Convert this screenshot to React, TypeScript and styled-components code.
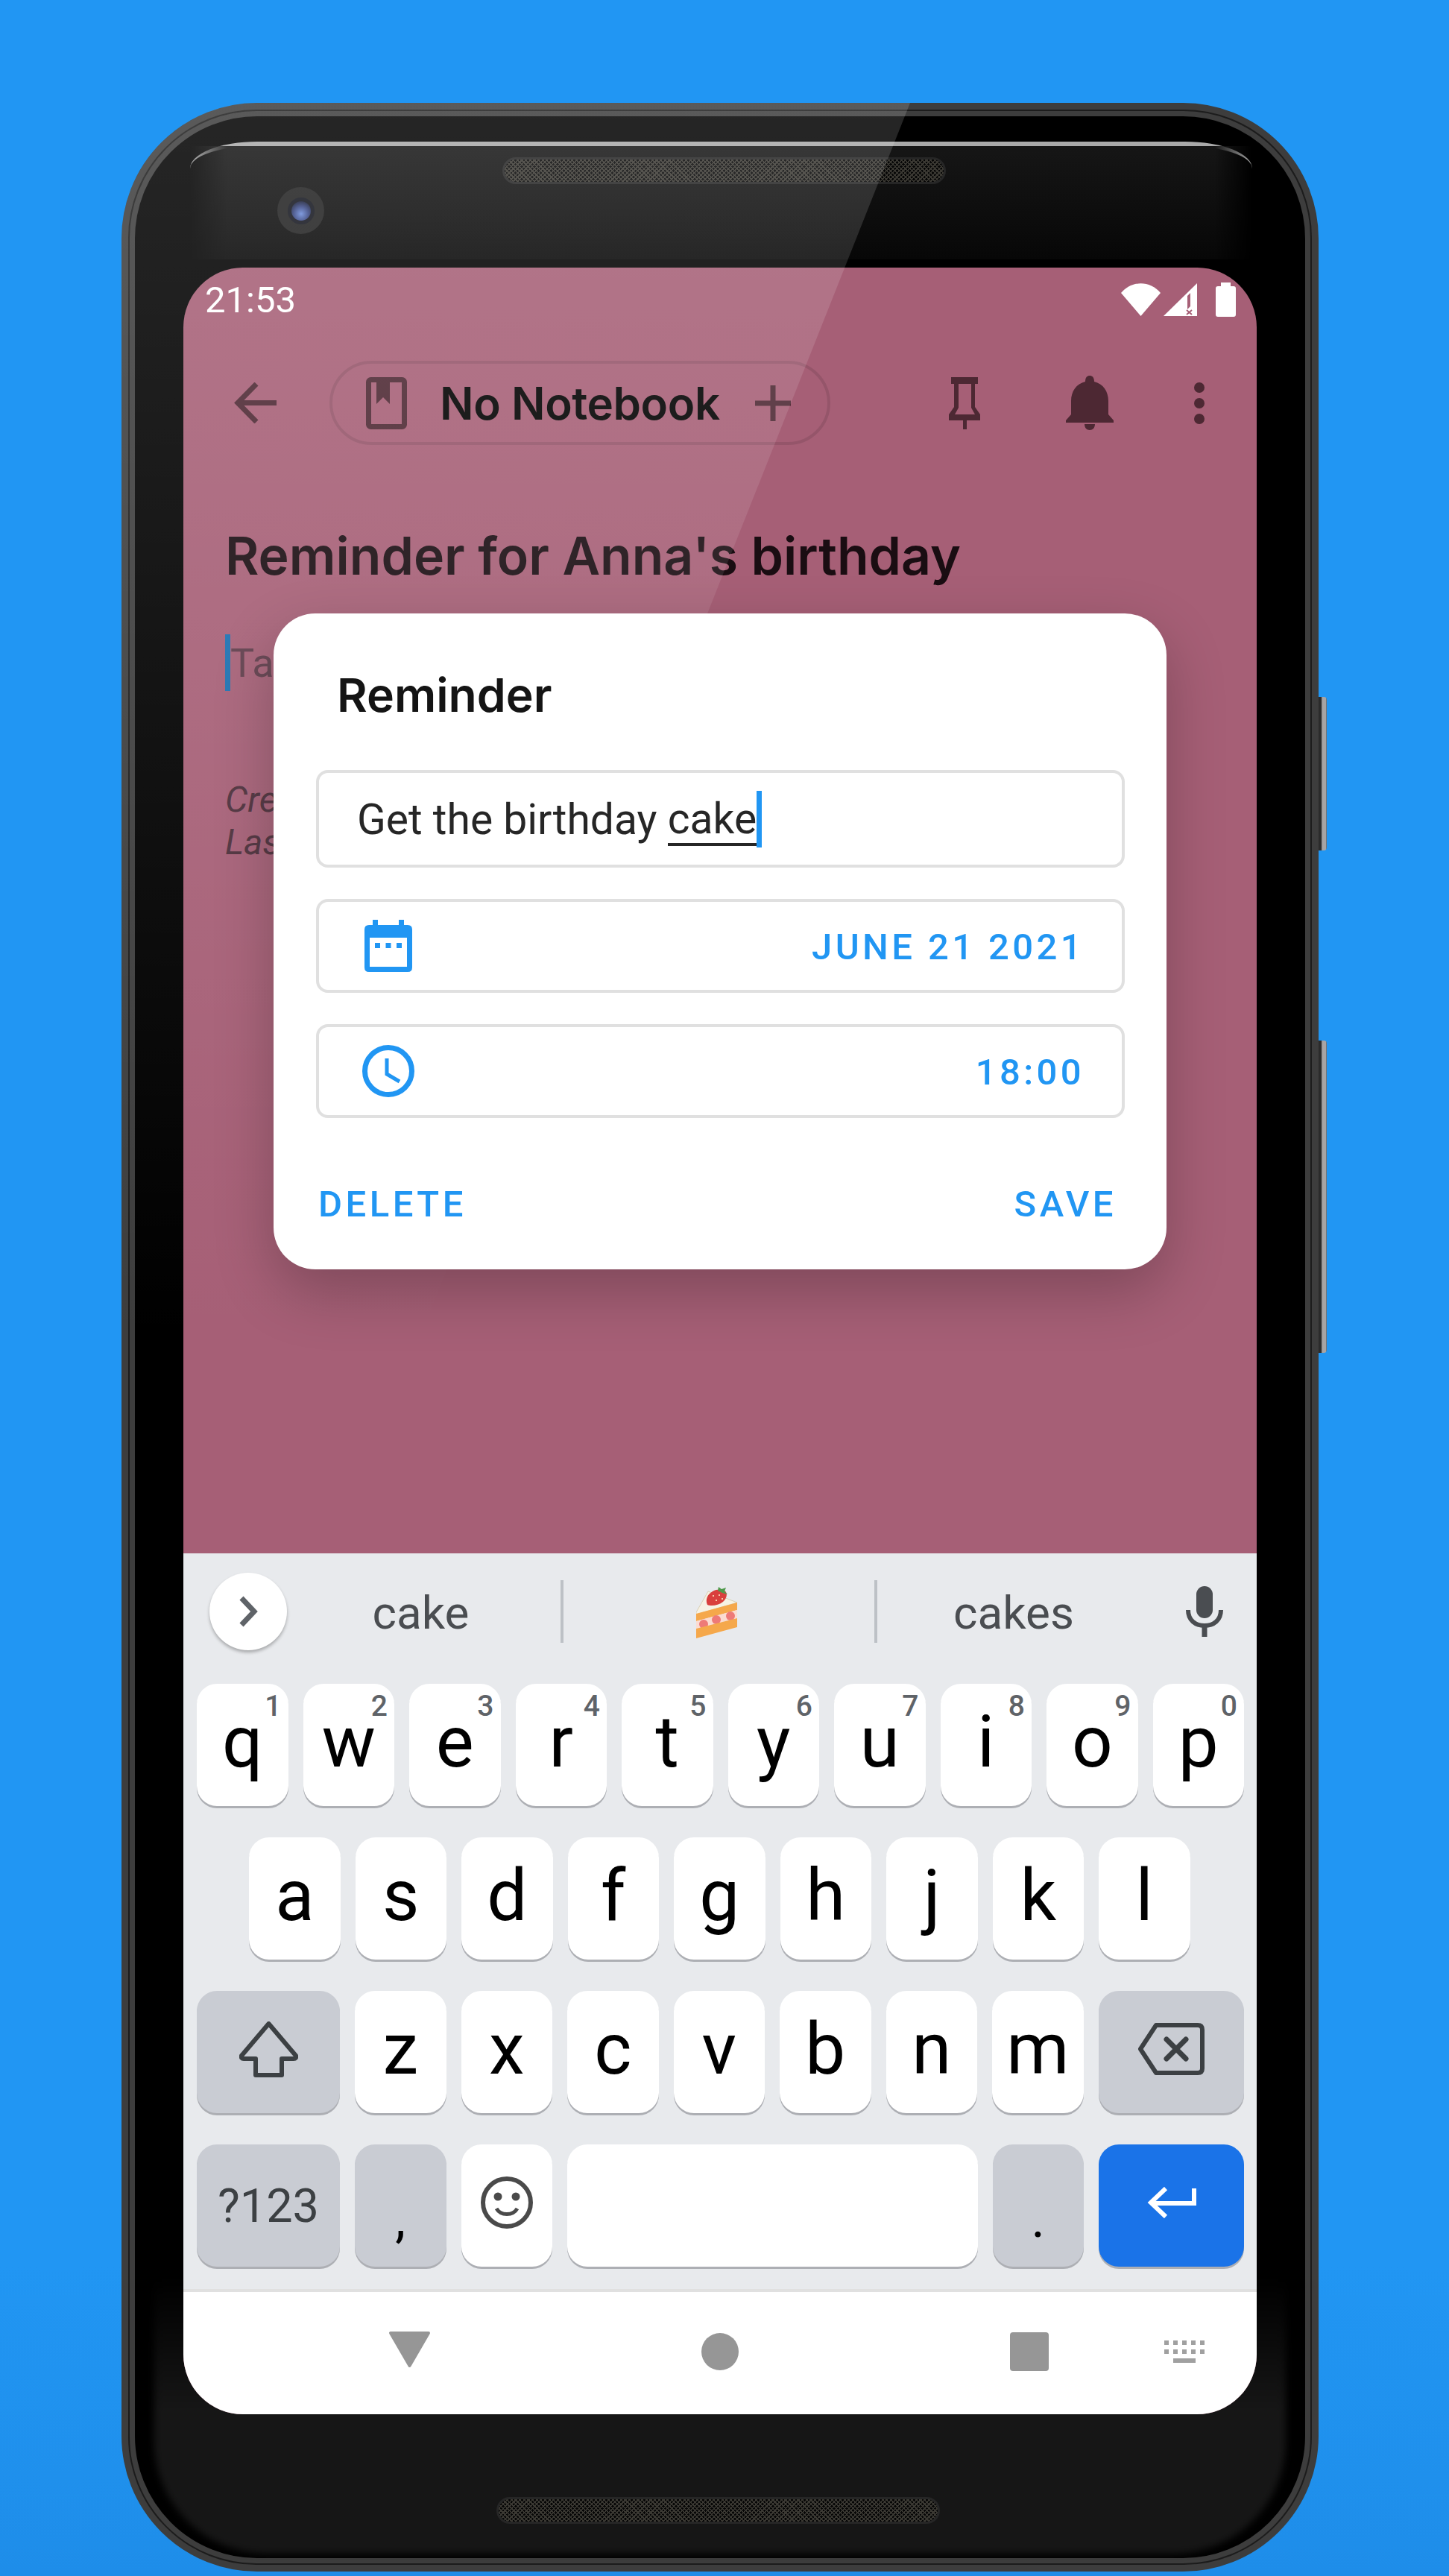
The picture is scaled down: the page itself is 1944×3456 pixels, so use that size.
import React from 'react'
import styled, { createGlobalStyle } from 'styled-components'

const GlobalStyle = createGlobalStyle`
  html, body {
    margin: 0;
    padding: 0;
  }
  body {
    width: 1944px;
    height: 3456px;
    overflow: hidden;
    font-family: Roboto, "Liberation Sans", sans-serif;
  }
  * {
    box-sizing: border-box;
  }
`

const Page = styled.div`
  width: 1944px;
  height: 3456px;
  padding: 138px 0 0 163px;
  background: linear-gradient(180deg, #2196f3 88%, #1e8de9 100%);
`

const Phone = styled.div`
  position: relative;
  width: 1606px;
  height: 3312px;
  border: 18px solid #3d3d3d;
  border-radius: 182px;
  background: #000;

  &::before {
    content: '';
    position: absolute;
    inset: -9px;
    border: 2px solid #1c1c1c;
    border-radius: 172px;
  }
`

const SideButton = styled.div<{ $top: number; $height: number }>`
  position: absolute;
  right: -29px;
  top: ${(p) => p.$top}px;
  width: 11px;
  height: ${(p) => p.$height}px;
  border-radius: 0 4px 4px 0;
  background: linear-gradient(90deg, #2b2b2b 0 30%, #a8a4a4 45% 90%, #4c4c4c 100%);
`

const Glare = styled.div`
  position: absolute;
  z-index: 1;
  inset: -18px;
  border-radius: 182px;
  background: linear-gradient(180deg, rgba(255, 255, 255, 0.15) 0, rgba(255, 255, 255, 0) 1660px);
  clip-path: polygon(0 0, 1058px 0, 0 2665px);
  pointer-events: none;
`

const TopBezel = styled.div`
  position: relative;
  isolation: isolate;
  display: flex;
  align-items: flex-start;
  height: 158px;
  margin: 34px 71px 0 74px;
  padding-left: 117px;
  border-top: 6px solid #a9a9a9;
  border-radius: 90px 90px 0 0 / 36px 36px 0 0;

  &::before {
    content: '';
    position: absolute;
    z-index: -1;
    inset: 0;
    background: linear-gradient(180deg, #161616, #070707);
    mask-image: linear-gradient(90deg, transparent, #000 50px, #000 calc(100% - 50px), transparent);
  }
`

const BottomShade = styled.div`
  position: absolute;
  left: 26px;
  right: 26px;
  top: 2900px;
  bottom: 6px;
  border-radius: 0 0 150px 150px;
  background: linear-gradient(180deg, transparent 0, #161616 180px, #161616 430px, #232323 468px, #0a0a0a 494px);
  filter: blur(5px);
`

const Camera = styled.div`
  display: flex;
  align-items: center;
  justify-content: center;
  width: 63px;
  height: 63px;
  margin-top: 55px;
  border-radius: 50%;
  background: #222;
`

const Lens = styled.div`
  width: 36px;
  height: 36px;
  border-radius: 50%;
  border: 5px solid #14161f;
  background: radial-gradient(circle at 50% 65%, #6c8bd8 0, #3b4a86 45%, #101425 90%);
`

const Speaker = styled.div<{ $marginLeft: number; $marginTop: number }>`
  position: relative;
  width: 595px;
  height: 36px;
  margin-left: ${(p) => p.$marginLeft}px;
  margin-top: ${(p) => p.$marginTop}px;
  border: 3px solid #262626;
  border-radius: 18px;
  background:
    repeating-linear-gradient(45deg, #3a3832 0 1.5px, transparent 1.5px 4px),
    repeating-linear-gradient(-45deg, #3a3832 0 1.5px, #060606 1.5px 4px);
`

const Screen = styled.div`
  position: relative;
  display: flex;
  flex-direction: column;
  width: 1440px;
  height: 2880px;
  margin: 11px 0 0 65px;
  border-radius: 80px;
  overflow: hidden;
  background: #a65f76;
`

const BottomBezel = styled.div`
  display: flex;
  justify-content: center;
  padding-top: 111px;
`

const StatusBar = styled.div`
  display: flex;
  align-items: center;
  justify-content: space-between;
  height: 86px;
  padding: 0 28px 0 29px;
`

const Clock = styled.span`
  font-size: 49px;
  color: #fff;
`

const StatusIcons = styled.div`
  display: flex;
  align-items: center;
`

const Toolbar = styled.div`
  display: flex;
  align-items: center;
  padding: 39px 0 0 68px;
`

const ToolIcon = styled.svg<{ $gap: number }>`
  flex: none;
  margin-left: ${(p) => p.$gap}px;
`

const Chip = styled.div`
  display: flex;
  align-items: center;
  width: 672px;
  height: 113px;
  margin-left: 71px;
  padding-left: 45px;
  border: 4px solid rgba(0, 0, 0, 0.1);
  border-radius: 57px;
`

const ChipLabel = styled.span`
  flex: 1;
  margin-left: 44px;
  font-family: Inter, sans-serif;
  font-size: 60px;
  font-weight: 600;
  letter-spacing: -0.4px;
  color: #000;
  white-space: nowrap;
`

const NoteArea = styled.div`
  flex: 1;
  padding-left: 56px;
`

const NoteTitle = styled.div`
  margin-top: 109px;
  font-family: Inter, sans-serif;
  font-size: 69.7px;
  font-weight: 600;
  line-height: 80px;
  color: #1a0d12;
  white-space: nowrap;
`

const TagLine = styled.div`
  display: flex;
  align-items: center;
  height: 76px;
  margin-top: 65px;
  font-size: 54px;
  color: #5f3c4a;
`

const NoteCaret = styled.span`
  width: 7px;
  height: 76px;
  background: #1a6fb0;
`

const Meta = styled.div`
  margin-top: 117px;
  font-size: 48px;
  font-style: italic;
  line-height: 57px;
  color: #4d2f3b;
`

const Dialog = styled.div`
  position: absolute;
  z-index: 2;
  left: 121px;
  top: 464px;
  width: 1198px;
  height: 880px;
  padding: 0 56px 0 57px;
  border-radius: 56px;
  background: #fff;
  box-shadow: 0 30px 80px rgba(0, 0, 0, 0.24);
`

const DialogTitle = styled.div`
  padding: 69px 0 0 28px;
  margin-bottom: 61px;
  font-family: Inter, sans-serif;
  font-size: 62.5px;
  font-weight: 600;
  line-height: 80px;
  color: #141414;
`

const Field = styled.div<{ $height: number }>`
  display: flex;
  align-items: center;
  justify-content: space-between;
  height: ${(p) => p.$height}px;
  margin-bottom: 42px;
  padding: 0 50px 0 61px;
  border: 4px solid #e0e0e0;
  border-radius: 16px;
`

const InputText = styled.div`
  display: flex;
  align-items: center;
  margin: 2px 0 0 -10px;
  font-size: 57px;
  color: #262626;
  white-space: pre;
`

const Composing = styled.span`
  border-bottom: 4px solid #262626;
  line-height: 64px;
  margin-top: 3px;
`

const InputCaret = styled.span`
  flex: none;
  width: 7px;
  height: 76px;
  margin-top: -2px;
  background: #2196f3;
`

const FieldValue = styled.span`
  padding-top: 3px;
  font-size: 49px;
  font-weight: 500;
  letter-spacing: 4.4px;
  color: #2196f3;
`

const Actions = styled.div`
  display: flex;
  justify-content: space-between;
  margin-top: 87px;
  padding: 0 11px 0 3px;
`

const ActionLabel = styled.span`
  font-size: 49px;
  font-weight: 500;
  letter-spacing: 4.5px;
  color: #2196f3;
`

const Keyboard = styled.div`
  display: flex;
  flex-direction: column;
  gap: 42px;
  height: 991px;
  padding: 0 17px 30px 18px;
  border-bottom: 4px solid #e0e0e0;
  background: #e8eaed;
`

const Suggestions = styled.div`
  display: flex;
  align-items: center;
  height: 155px;
  margin-bottom: -22px;
  padding-left: 17px;
`

const ExpandButton = styled.div`
  display: flex;
  flex: none;
  align-items: center;
  justify-content: center;
  width: 104px;
  height: 104px;
  border-radius: 50%;
  background: #fff;
  box-shadow: 0 3px 4px rgba(0, 0, 0, 0.28);
`

const Suggestion = styled.div<{ $width: number; $shift?: number }>`
  display: flex;
  align-items: center;
  justify-content: center;
  width: ${(p) => p.$width}px;
  padding-right: ${(p) => p.$shift || 0}px;
  padding-top: 3px;
  font-size: 62px;
  color: #4a4d51;
`

const SuggestionDivider = styled.div`
  flex: none;
  width: 4px;
  height: 84px;
  background: #bdc1c6;
`

const KeyRow = styled.div<{ $inset?: number }>`
  display: flex;
  gap: 20px;
  height: 164px;
  padding-left: ${(p) => p.$inset || 0}px;
`

const Key = styled.div<{ $width?: number; $tone?: 'light' | 'grey' | 'blue' }>`
  position: relative;
  display: flex;
  flex: none;
  align-items: center;
  justify-content: center;
  width: ${(p) => p.$width || 122.5}px;
  height: 164px;
  padding-bottom: 8px;
  border-radius: 27px;
  font-size: 96px;
  color: #000;
  background: ${(p) => (p.$tone === 'grey' ? '#c9ccd3' : p.$tone === 'blue' ? '#1a73e8' : '#fff')};
  box-shadow: 0 3px 0 #adafb4;
`

const Hint = styled.span`
  position: absolute;
  top: 7px;
  right: 9px;
  font-size: 39px;
  font-weight: 500;
  line-height: 46px;
  color: #5f6368;
`

const ModeLabel = styled.span`
  margin-top: 9px;
  font-size: 63px;
  color: #3c4043;
`

const Punctuation = styled.span`
  margin-top: 44px;
  font-size: 70px;
  line-height: 120px;
`

const NavBar = styled.div`
  display: flex;
  flex: none;
  align-items: center;
  height: 164px;
  padding: 0 0 4px 275px;
  background: #fff;
`

const NavShape = styled.div<{ $gap: number }>`
  flex: none;
  width: 52px;
  height: 52px;
  margin-left: ${(p) => p.$gap}px;
  background: #969696;
`

const NavCircle = styled(NavShape)`
  width: 50px;
  height: 50px;
  border-radius: 50%;
`

const NavSquare = styled(NavShape)`
  border-radius: 4px;
`

const letters = [
  ['q', '1'], ['w', '2'], ['e', '3'], ['r', '4'], ['t', '5'],
  ['y', '6'], ['u', '7'], ['i', '8'], ['o', '9'], ['p', '0'],
]
const homeRow = ['a', 's', 'd', 'f', 'g', 'h', 'j', 'k', 'l']
const bottomRow = ['z', 'x', 'c', 'v', 'b', 'n', 'm']

const iconColor = '#4d2833'
const blue = '#2196f3'

const WifiIcon = () => (
  <svg width="53" height="44" viewBox="0 0 53 44" style={{ marginRight: 4 }}>
    <path d="M0 13C14-4 39-4 53 13L26.5 44Z" fill="#fff" />
  </svg>
)

const CellIcon = () => (
  <svg width="45" height="44" viewBox="0 0 45 44" style={{ marginRight: 25 }}>
    <path d="M0 44L45 0V44Z" fill="#fff" />
    <path d="M32 17L36 13V31L32 35Z" fill="#a65f76" />
    <path d="M31 36L38 42M38 36L31 42" stroke="#a65f76" strokeWidth="2" />
  </svg>
)

const BatteryIcon = () => (
  <svg width="27" height="46" viewBox="0 0 27 46">
    <path d="M7 0H20V5H24Q27 5 27 8V43Q27 46 24 46H3Q0 46 0 43V8Q0 5 3 5H7Z" fill="#fff" />
  </svg>
)

const CakeIcon = () => (
  <svg width="55" height="69" viewBox="0 0 55 69" role="img" aria-label="shortcake">
    <path d="M0 34L16 6L55 21L0 37Z" fill="#f6f2e4" stroke="#d9cfb4" strokeWidth="1" />
    <path d="M0 36L55 21V31L0 46Z" fill="#f5a84b" />
    <path d="M0 46L55 31V42L0 56Z" fill="#fbdcd2" />
    <circle cx="10" cy="50" r="6" fill="#ee7a78" />
    <circle cx="27" cy="44" r="6" fill="#ee7a78" />
    <circle cx="46" cy="39" r="6" fill="#ee7a78" />
    <path d="M0 56L55 42V54L0 69Z" fill="#f5a84b" />
    <path d="M38 5C43 8 41 16 36 20C30 25 20 26 15 24C12 17 15 10 22 6C28 3 33 3 38 5Z" fill="#d93f3d" />
    <path d="M29 5L30 0L34 3L40 1L38 6L42 10L35 8Z" fill="#4f9a4b" />
    <path d="M22 11h2v2h-2zM30 10h2v2h-2zM26 17h2v2h-2zM34 15h2v2h-2z" fill="#f6c9a8" />
  </svg>
)

const App = () => {
  return (
    <Page>
      <GlobalStyle />
      <Phone>
        <SideButton $top={779} $height={206} />
        <SideButton $top={1240} $height={419} />
        <BottomShade />
        <TopBezel>
          <Camera>
            <Lens />
          </Camera>
          <Speaker $marginLeft={239} $marginTop={15} />
        </TopBezel>
        <Screen>
          <StatusBar>
            <Clock>21:53</Clock>
            <StatusIcons>
              <WifiIcon />
              <CellIcon />
              <BatteryIcon />
            </StatusIcons>
          </StatusBar>
          <Toolbar>
            <ToolIcon $gap={0} width="57" height="55" viewBox="0 0 57 55">
              <path d="M30 2L5 27.5L30 53M5 27.5H57" fill="none" stroke={iconColor} strokeWidth="7" />
            </ToolIcon>
            <Chip>
              <svg width="55" height="70" viewBox="0 0 55 70">
                <rect x="3.5" y="3.5" width="48" height="63" rx="3" fill="none" stroke={iconColor} strokeWidth="7" />
                <path d="M14 3H32V36L23 27L14 36Z" fill={iconColor} />
              </svg>
              <ChipLabel>No Notebook</ChipLabel>
              <svg width="48" height="48" viewBox="0 0 48 48" style={{ marginRight: 49 }}>
                <path d="M24 0V48M0 24H48" stroke={iconColor} strokeWidth="7" />
              </svg>
            </Chip>
            <ToolIcon $gap={159} width="42" height="70" viewBox="0 0 42 70">
              <path
                fillRule="evenodd"
                d="M3 0H39V9H35V40L42 50V58H24V70H19V58H0V50L7 40V9H3ZM13 9V41L8 50H35L30 41V9Z"
                fill={iconColor}
              />
            </ToolIcon>
            <ToolIcon $gap={115} width="64" height="73" viewBox="0 0 64 73">
              <path
                d="M32 0C36 0 38 3 38 8C50 11 57 21 57 34V52L64 60V63H0V60L7 52V34C7 21 14 11 26 8C26 3 28 0 32 0ZM25 65H39C39 70 36 73 32 73C28 73 25 70 25 65Z"
                fill={iconColor}
              />
            </ToolIcon>
            <ToolIcon $gap={108} width="14" height="56" viewBox="0 0 14 56">
              <circle cx="7" cy="7" r="7" fill={iconColor} />
              <circle cx="7" cy="28" r="7" fill={iconColor} />
              <circle cx="7" cy="49" r="7" fill={iconColor} />
            </ToolIcon>
          </Toolbar>
          <NoteArea>
            <NoteTitle>Reminder for Anna's birthday</NoteTitle>
            <TagLine>
              <NoteCaret />
              Ta
            </TagLine>
            <Meta>
              Cre
              <br />
              Las
            </Meta>
          </NoteArea>
          <Dialog>
            <DialogTitle>Reminder</DialogTitle>
            <Field $height={131}>
              <InputText>
                Get the birthday <Composing>cake</Composing>
                <InputCaret />
              </InputText>
            </Field>
            <Field $height={126}>
              <svg width="64" height="70" viewBox="0 0 64 70">
                <path
                  fillRule="evenodd"
                  d="M11 0H18V7H46V0H53V7H58Q64 7 64 13V64Q64 70 58 70H6Q0 70 0 64V13Q0 7 6 7H11ZM7 24V63H57V24Z"
                  fill={blue}
                />
                <path d="M14 31H21V38H14ZM28.500 31H35.500V38H28.500ZM43 31H50V38H43Z" fill={blue} />
              </svg>
              <FieldValue>JUNE 21 2021</FieldValue>
            </Field>
            <Field $height={126}>
              <svg width="70" height="70" viewBox="0 0 70 70" style={{ marginLeft: -3 }}>
                <circle cx="35" cy="35" r="31.500" fill="none" stroke={blue} strokeWidth="7" />
                <path d="M33 18V39L50 49" fill="none" stroke={blue} strokeWidth="5" />
              </svg>
              <FieldValue>18:00</FieldValue>
            </Field>
            <Actions>
              <ActionLabel>DELETE</ActionLabel>
              <ActionLabel>SAVE</ActionLabel>
            </Actions>
          </Dialog>
          <Keyboard>
            <Suggestions>
              <ExpandButton>
                <svg width="26" height="42" viewBox="0 0 26 42">
                  <path d="M4 3L21 21L4 39" fill="none" stroke="#5f6368" strokeWidth="7" />
                </svg>
              </ExpandButton>
              <Suggestion $width={367} $shift={8}>cake</Suggestion>
              <SuggestionDivider />
              <Suggestion $width={417} $shift={6}>
                <CakeIcon />
              </Suggestion>
              <SuggestionDivider />
              <Suggestion $width={366}>cakes</Suggestion>
              <svg width="50" height="68" viewBox="0 0 50 68" style={{ marginLeft: 48 }}>
                <rect x="14" y="0" width="22" height="43" rx="11" fill="#4a4d51" />
                <path d="M3 32C3 46 13 53 25 53C37 53 47 46 47 32" fill="none" stroke="#4a4d51" strokeWidth="6" />
                <path d="M25 50V68" stroke="#4a4d51" strokeWidth="7" />
              </svg>
            </Suggestions>
            <KeyRow>
              {letters.map(([letter, digit]) => (
                <Key key={letter}>
                  {letter}
                  <Hint>{digit}</Hint>
                </Key>
              ))}
            </KeyRow>
            <KeyRow $inset={70}>
              {homeRow.map((letter) => (
                <Key key={letter}>{letter}</Key>
              ))}
            </KeyRow>
            <KeyRow>
              <Key $width={192} $tone="grey">
                <svg width="79" height="75" viewBox="0 0 79 75">
                  <path
                    d="M39.500 3L76 46Q77 50 73 50H57V72H22V50H6Q2 50 3 46Z"
                    fill="none"
                    stroke="#3c4043"
                    strokeWidth="6"
                    strokeLinejoin="round"
                  />
                </svg>
              </Key>
              {bottomRow.map((letter) => (
                <Key key={letter}>{letter}</Key>
              ))}
              <Key $width={195} $tone="grey">
                <svg width="89" height="70" viewBox="0 0 89 70">
                  <path
                    d="M24 3H80Q86 3 86 9V61Q86 67 80 67H24L3 35Z"
                    fill="none"
                    stroke="#3c4043"
                    strokeWidth="6"
                    strokeLinejoin="round"
                  />
                  <path d="M38 22L64 48M64 22L38 48" stroke="#3c4043" strokeWidth="7" strokeLinecap="round" />
                </svg>
              </Key>
            </KeyRow>
            <KeyRow>
              <Key $width={192} $tone="grey">
                <ModeLabel>?123</ModeLabel>
              </Key>
              <Key $tone="grey">
                <Punctuation>,</Punctuation>
              </Key>
              <Key>
                <svg width="70" height="70" viewBox="0 0 70 70">
                  <circle cx="35" cy="35" r="32" fill="none" stroke="#4a4a4a" strokeWidth="6" />
                  <circle cx="23" cy="27" r="5.500" fill="#4a4a4a" />
                  <circle cx="47" cy="27" r="5.500" fill="#4a4a4a" />
                  <path d="M21 43C27 53 43 53 49 43" fill="none" stroke="#4a4a4a" strokeWidth="5" />
                </svg>
              </Key>
              <Key $width={550.5} />
              <Key $tone="grey">
                <Punctuation>.</Punctuation>
              </Key>
              <Key $width={195} $tone="blue">
                <svg width="66" height="42" viewBox="0 0 66 42">
                  <path d="M25 2L5 21L25 40M5 22H63V2" fill="none" stroke="#fff" strokeWidth="6" />
                </svg>
              </Key>
            </KeyRow>
          </Keyboard>
          <NavBar>
            <svg width="57" height="50" viewBox="0 0 57 50" style={{ marginBottom: 6 }}>
              <path d="M3 3H54L28.500 47Z" fill="#969696" stroke="#969696" strokeWidth="4" strokeLinejoin="round" />
            </svg>
            <NavCircle $gap={363} />
            <NavSquare $gap={364} />
            <svg width="54" height="30" viewBox="0 0 54 30" style={{ marginLeft: 155 }}>
              <path
                d="M0 0H6V6H0ZM12 0H18V6H12ZM24 0H30V6H24ZM36 0H42V6H36ZM48 0H54V6H48ZM0 12H6V18H0ZM12 12H18V18H12ZM24 12H30V18H24ZM36 12H42V18H36ZM48 12H54V18H48ZM12 24H42V30H12Z"
                fill="#a0a0a0"
              />
            </svg>
          </NavBar>
        </Screen>
        <BottomBezel>
          <Speaker $marginLeft={-6} $marginTop={0} />
        </BottomBezel>
        <Glare />
      </Phone>
    </Page>
  )
}

export default App
